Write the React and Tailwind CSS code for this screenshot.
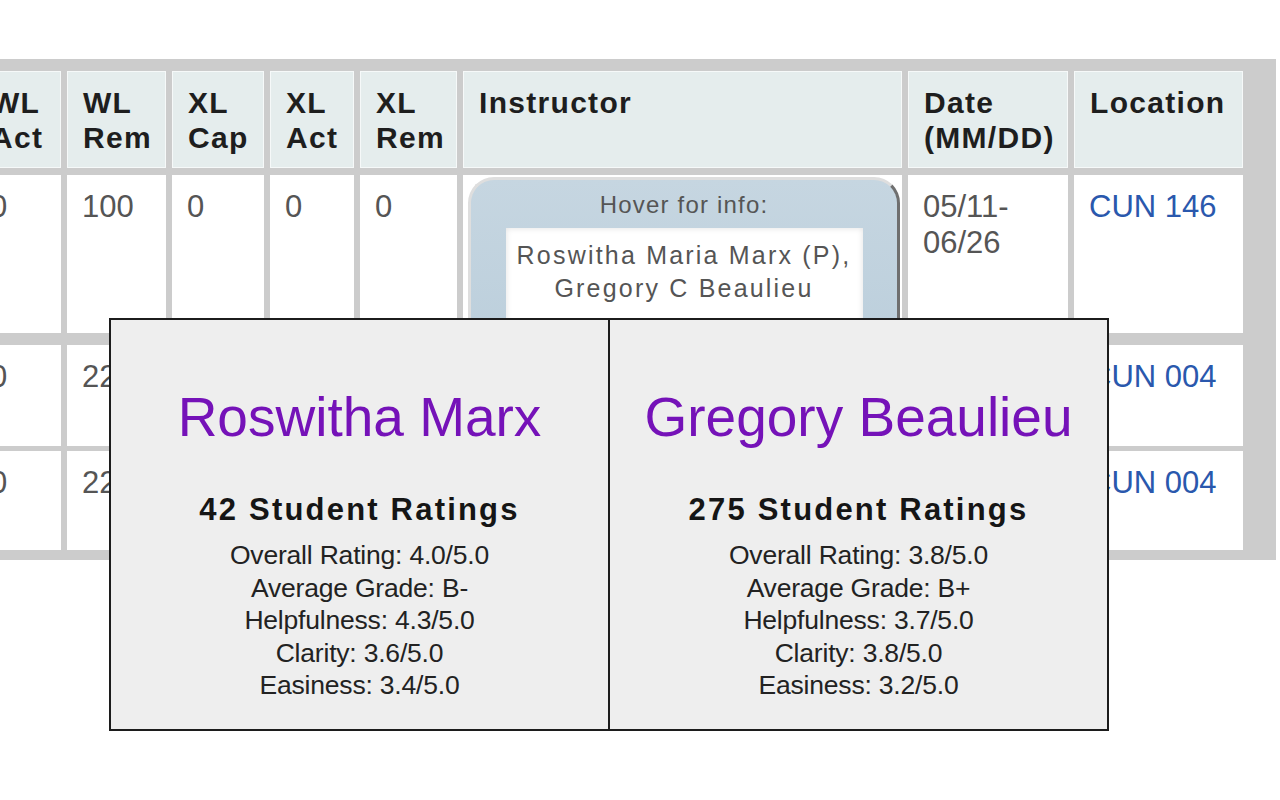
import React from 'react'

const cols = 'grid grid-cols-[86px_99px_92px_84px_97px_439px_160px_169px] gap-x-[6px]'

const headers = [
  ['WL', 'Act'],
  ['WL', 'Rem'],
  ['XL', 'Cap'],
  ['XL', 'Act'],
  ['XL', 'Rem'],
  ['Instructor'],
  ['Date', '(MM/DD)'],
  ['Location'],
]

function HeaderCell({ lines }) {
  return (
    <div className="bg-[#e5eded] border border-[#f6f9f9] pl-[15px] pt-[13px] text-[30px] leading-[35px] font-bold tracking-[1.3px] text-[#1e1e1e]">
      {lines.map(l => <div key={l}>{l}</div>)}
    </div>
  )
}

function Cell({ children, link }) {
  return (
    <div className={`bg-white pl-[15px] pt-[14px] text-[31px] leading-[36px] overflow-hidden ${link ? 'text-[#2a58ad]' : 'text-[#555]'}`}>
      {children}
    </div>
  )
}

function InstructorBox() {
  return (
    <div className="bg-white pt-[2px] pl-[5px] pr-[2px] overflow-hidden">
      <div className="h-[170px] rounded-[26px] border-[3px] border-[#dedede] border-r-[#6f6f6f] bg-gradient-to-b from-[#c6d6e1] to-[#bccfdc] flex flex-col items-center">
        <div className="mt-[10px] text-[24px] leading-[30px] tracking-[1.2px] text-[#555]">Hover for info:</div>
        <div className="mt-[8px] w-[357px] h-[120px] bg-white shadow-[inset_0_0_6px_rgba(0,0,0,0.12)] text-center pt-[11px] text-[25px] leading-[33px] tracking-[2.2px] text-[#555]">
          <div>Roswitha Maria Marx (P),</div>
          <div>Gregory C Beaulieu</div>
        </div>
      </div>
    </div>
  )
}

function RatingCard({ name, count, stats, divider }) {
  return (
    <div className={`flex-1 flex flex-col items-center pt-[70px] ${divider ? 'border-l-2 border-[#1c1c1c]' : ''}`}>
      <div className="text-[55px] leading-[55px] text-[#7512b8]">{name}</div>
      <div className="mt-[49px] text-[31px] leading-[31px] font-bold tracking-[2.2px] text-[#151515]">{count} Student Ratings</div>
      <div className="mt-[14px] text-[26.5px] leading-[32.5px] text-[#222] text-center tracking-[-0.2px]">
        {stats.map(s => <div key={s}>{s}</div>)}
      </div>
    </div>
  )
}

export default function App() {
  return (
    <div className="relative w-[1280px] h-[800px] overflow-hidden bg-white" style={{ fontFamily: '"Liberation Sans", Arial, sans-serif' }}>
      <div className="mt-[59px] ml-[-31px] w-[1307px] bg-[#cccccc] pt-[12px] pb-[10px] pl-[6px] pr-[33px]">
        <div className={`${cols} h-[97px]`}>
          {headers.map(h => <HeaderCell key={h.join()} lines={h} />)}
        </div>

        <div className={`${cols} h-[158px] mt-[7px]`}>
          <Cell>0</Cell>
          <Cell>100</Cell>
          <Cell>0</Cell>
          <Cell>0</Cell>
          <Cell>0</Cell>
          <InstructorBox />
          <Cell>05/11-<br />06/26</Cell>
          <Cell link>CUN 146</Cell>
        </div>

        <div className={`${cols} h-[101px] mt-[12px]`}>
          <Cell>0</Cell>
          <Cell>225</Cell>
          <Cell></Cell>
          <Cell></Cell>
          <Cell></Cell>
          <Cell></Cell>
          <Cell></Cell>
          <Cell link>CUN 004</Cell>
        </div>

        <div className={`${cols} h-[99px] mt-[5px]`}>
          <Cell>0</Cell>
          <Cell>225</Cell>
          <Cell></Cell>
          <Cell></Cell>
          <Cell></Cell>
          <Cell></Cell>
          <Cell></Cell>
          <Cell link>CUN 004</Cell>
        </div>
      </div>

      {/* hover popup */}
      <div className="absolute left-[109px] top-[318px] w-[1000px] h-[413px] bg-[#eeeeee] border-2 border-[#1c1c1c] flex">
        <RatingCard
          name="Roswitha Marx"
          count="42"
          stats={['Overall Rating: 4.0/5.0', 'Average Grade: B-', 'Helpfulness: 4.3/5.0', 'Clarity: 3.6/5.0', 'Easiness: 3.4/5.0']}
        />
        <RatingCard
          divider
          name="Gregory Beaulieu"
          count="275"
          stats={['Overall Rating: 3.8/5.0', 'Average Grade: B+', 'Helpfulness: 3.7/5.0', 'Clarity: 3.8/5.0', 'Easiness: 3.2/5.0']}
        />
      </div>
    </div>
  )
}
